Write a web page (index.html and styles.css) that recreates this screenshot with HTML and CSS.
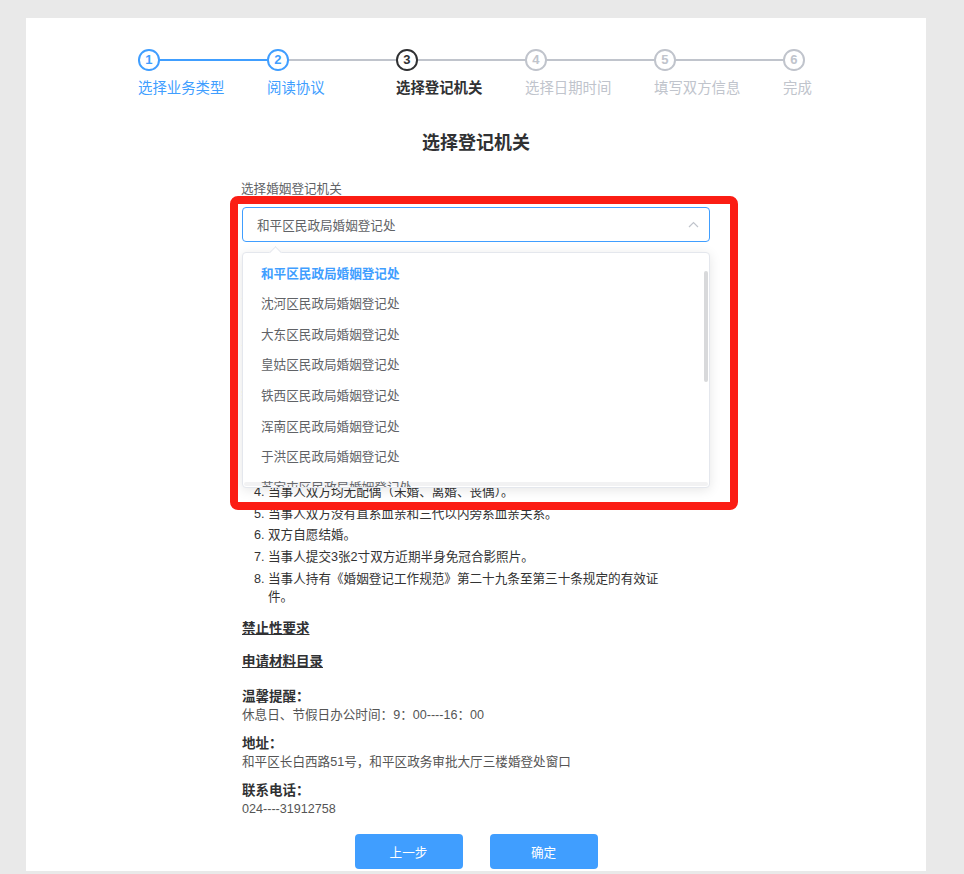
FILE: index.html
```html
<!DOCTYPE html>
<html>
<head>
    <meta charset="utf-8">
    <title>选择登记机关</title>
    <link rel="stylesheet" href="styles.css">
</head>
<body>
    <div class="card">
        <!-- Steps -->
        <div class="steps">
            <div class="step done line-done">
                <div class="step-head"><span class="step-line"></span><span class="step-icon">1</span></div>
                <div class="step-title">选择业务类型</div>
            </div>
            <div class="step done">
                <div class="step-head"><span class="step-line"></span><span class="step-icon">2</span></div>
                <div class="step-title">阅读协议</div>
            </div>
            <div class="step current">
                <div class="step-head"><span class="step-line"></span><span class="step-icon">3</span></div>
                <div class="step-title">选择登记机关</div>
            </div>
            <div class="step">
                <div class="step-head"><span class="step-line"></span><span class="step-icon">4</span></div>
                <div class="step-title">选择日期时间</div>
            </div>
            <div class="step">
                <div class="step-head"><span class="step-line"></span><span class="step-icon">5</span></div>
                <div class="step-title">填写双方信息</div>
            </div>
            <div class="step last">
                <div class="step-head"><span class="step-icon">6</span></div>
                <div class="step-title">完成</div>
            </div>
        </div>

        <h2 class="page-title">选择登记机关</h2>

        <div class="form">
            <div class="form-item">
                <label class="form-label">选择婚姻登记机关</label>
                <div class="select">
                    <span class="select-value">和平区民政局婚姻登记处</span>
                    <svg class="select-arrow" width="11" height="7" viewBox="0 0 11 7">
                        <path d="M1 6 L5.5 1.5 L10 6" fill="none" stroke="#c0c4cc" stroke-width="1.2"/>
                    </svg>
                </div>

                <!-- Dropdown (open) -->
                <div class="dropdown">
                    <span class="dropdown-arrow"></span>
                    <ul class="dropdown-list">
                        <li class="selected">和平区民政局婚姻登记处</li>
                        <li>沈河区民政局婚姻登记处</li>
                        <li>大东区民政局婚姻登记处</li>
                        <li>皇姑区民政局婚姻登记处</li>
                        <li>铁西区民政局婚姻登记处</li>
                        <li>浑南区民政局婚姻登记处</li>
                        <li>于洪区民政局婚姻登记处</li>
                        <li>苏家屯区民政局婚姻登记处</li>
                        <li>沈北新区民政局婚姻登记处</li>
                        <li>辽中区民政局婚姻登记处</li>
                    </ul>
                    <span class="scroll-bar"></span>
                    <span class="scroll-bar-h"></span>
                </div>
            </div>

            <div class="info">
                <div class="tip">
                    <div class="tip-title">办理对象：</div>
                    <div class="tip-text">内地居民（男女双方）</div>
                </div>
                <div class="tip">
                    <div class="tip-title">办理时限：</div>
                    <div class="tip-text">即时办结</div>
                </div>

                <div class="link-title">结婚登记条件</div>
                <ol class="conditions">
                    <li>男方年满22周岁，女方年满20周岁。</li>
                    <li>当事人双方须亲自到婚姻登记机关申请。</li>
                    <li>当事人双方具有完全民事行为能力。</li>
                    <li>当事人双方均无配偶（未婚、离婚、丧偶）。</li>
                    <li>当事人双方没有直系血亲和三代以内旁系血亲关系。</li>
                    <li>双方自愿结婚。</li>
                    <li>当事人提交3张2寸双方近期半身免冠合影照片。</li>
                    <li>当事人持有《婚姻登记工作规范》第二十九条至第三十条规定的有效证件。</li>
                </ol>

                <div class="link-title">禁止性要求</div>
                <div class="link-title">申请材料目录</div>

                <div class="tip first">
                    <div class="tip-title">温馨提醒：</div>
                    <div class="tip-text">休息日、节假日办公时间：9：00----16：00</div>
                </div>
                <div class="tip">
                    <div class="tip-title">地址：</div>
                    <div class="tip-text">和平区长白西路51号，和平区政务审批大厅三楼婚登处窗口</div>
                </div>
                <div class="tip">
                    <div class="tip-title">联系电话：</div>
                    <div class="tip-text">024----31912758</div>
                </div>
            </div>
        </div>

        <div class="buttons">
            <button class="btn">上一步</button>
            <button class="btn">确定</button>
        </div>

        <!-- red highlight frame -->
        <div class="highlight"></div>
    </div>
</body>
</html>
```

FILE: styles.css
```css
html, body {
    margin: 0;
    padding: 0;
}

body {
    font-family: "Liberation Sans", "Noto Sans CJK SC", sans-serif;
    background: #e9e9e9;
    padding: 18px 0 0 26px;
    height: 874px;
    box-sizing: border-box;
    overflow: hidden;
}

.card {
    position: relative;
    width: 900px;
    background: #fff;
    padding: 31px 0 2px;
}

/* steps */
.steps {
    display: flex;
    padding-left: 112px;
}
.step {
    flex: 0 0 129px;
}
.step.last {
    flex: 0 0 auto;
}
.step-head {
    position: relative;
    height: 21.6px;
}
.step-line {
    position: absolute;
    left: 0;
    right: 0;
    top: 9.9px;
    height: 2px;
    background: #c0c4cc;
}
.line-done .step-line {
    background: #409eff;
}
.step-icon {
    position: relative;
    z-index: 1;
    display: flex;
    align-items: center;
    justify-content: center;
    width: 21.6px;
    height: 21.6px;
    box-sizing: border-box;
    border: 2px solid #c0c4cc;
    border-radius: 50%;
    background: #fff;
    color: #c0c4cc;
    font-size: 13px;
    font-weight: bold;
}
.step-title {
    font-size: 14.4px;
    line-height: 34.2px;
    color: #c0c4cc;
    white-space: nowrap;
}
.done .step-icon {
    border-color: #409eff;
    color: #409eff;
}
.done .step-title {
    color: #409eff;
}
.current .step-icon {
    border-color: #303133;
    color: #303133;
}
.current .step-title {
    color: #303133;
    font-weight: bold;
}

.page-title {
    margin: 25px 0 0;
    font-size: 18px;
    line-height: 26px;
    text-align: center;
    color: #303133;
}

/* form */
.form {
    width: 468px;
    margin: 24px auto 0;
}
.form-item {
    position: relative;
}
.form-label {
    display: block;
    margin-left: -1px;
    margin-bottom: 9px;
    font-size: 12.6px;
    line-height: 18px;
    color: #606266;
}
.select {
    display: flex;
    align-items: center;
    justify-content: space-between;
    height: 35px;
    box-sizing: border-box;
    padding: 0 10px 0 14px;
    border: 1px solid #409eff;
    border-radius: 4px;
    font-size: 12.6px;
    color: #606266;
}

.dropdown {
    position: absolute;
    left: 0;
    top: 72.5px;
    width: 468px;
    height: 236px;
    box-sizing: border-box;
    border: 1px solid #e4e7ed;
    border-radius: 4px;
    background: #fff;
    box-shadow: 0 2px 12px rgba(0, 0, 0, 0.1);
    z-index: 5;
}
.dropdown-arrow {
    position: absolute;
    top: -5px;
    left: 28px;
    width: 8px;
    height: 8px;
    background: #fff;
    border-top: 1px solid #e4e7ed;
    border-left: 1px solid #e4e7ed;
    transform: rotate(45deg);
}
.dropdown-list {
    list-style: none;
    margin: 0;
    padding: 5.4px 0 0;
    height: 100%;
    box-sizing: border-box;
    overflow: hidden;
}
.dropdown-list li {
    height: 30.6px;
    line-height: 30.6px;
    padding: 0 18px;
    font-size: 12.6px;
    color: #606266;
}
.dropdown-list li.selected {
    color: #409eff;
    font-weight: bold;
}
.scroll-bar {
    position: absolute;
    right: 1px;
    top: 18px;
    width: 4.5px;
    height: 111px;
    border-radius: 3px;
    background: rgba(144, 147, 153, 0.35);
}
.scroll-bar-h {
    position: absolute;
    left: 1px;
    right: 1px;
    bottom: 1px;
    height: 4px;
    border-radius: 3px;
    background: rgba(144, 147, 153, 0.12);
}

/* info */
.info {
    width: 425px;
    margin-top: 47px;
}
.tip {
    margin-top: 11px;
}
.tip:first-child {
    margin-top: 0;
}
.tip.first {
    margin-top: 16px;
}
.tip-title {
    font-size: 13.5px;
    line-height: 18px;
    font-weight: bold;
    color: #303133;
}
.tip-text {
    font-size: 12.6px;
    line-height: 18px;
    color: #555;
}
.link-title {
    margin-top: 13px;
    font-size: 13.5px;
    line-height: 20px;
    font-weight: bold;
    color: #303133;
    text-decoration: underline;
}
.conditions {
    margin: 13px 0 0;
    padding-left: 26px;
    font-size: 12.6px;
    line-height: 18px;
    color: #333;
}
.conditions li {
    margin-bottom: 3.7px;
}
.conditions li:last-child {
    margin-bottom: 0;
}

/* buttons */
.buttons {
    display: flex;
    justify-content: center;
    gap: 27px;
    margin-top: 16px;
}
.btn {
    width: 108px;
    height: 35px;
    border: none;
    border-radius: 4px;
    background: #409eff;
    color: #fff;
    font-family: inherit;
    font-size: 12.6px;
}

.highlight {
    position: absolute;
    left: 204px;
    top: 178px;
    width: 508px;
    height: 314px;
    box-sizing: border-box;
    border: 8px solid #fb1d14;
    border-radius: 8px;
    z-index: 10;
}
```
